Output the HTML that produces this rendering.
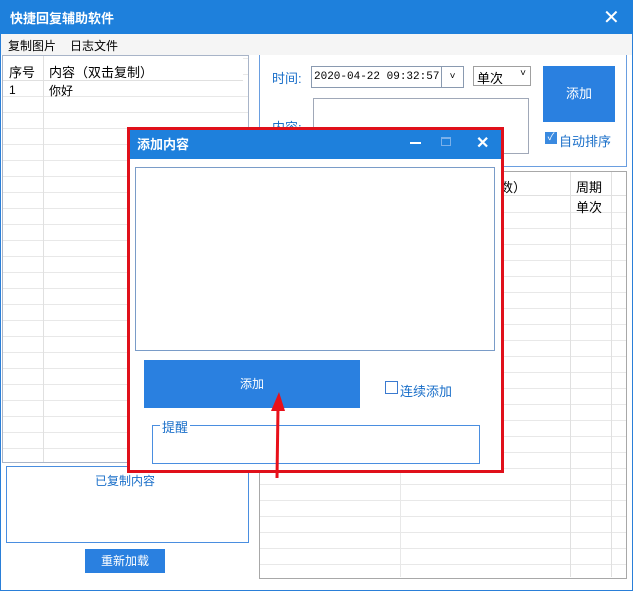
<!DOCTYPE html>
<html><head><meta charset="utf-8"><style>
*{margin:0;padding:0;box-sizing:border-box}
body{width:633px;height:591px;position:relative;overflow:hidden;background:#fff;font-family:"Liberation Sans","Noto Sans CJK SC","WenQuanYi Zen Hei",sans-serif;font-size:12px;color:#000}
.a{position:absolute}
.blue{color:#1a6fc9}
</style></head><body>
<div class="a" style="left:0;top:0;width:633px;height:591px;border:1px solid #2a7fd8"></div>
<div class="a" style="left:0;top:0;width:633px;height:34px;background:#1e80dc"></div>
<div class="a" style="left:10px;top:8px;color:#fff;font-size:13px;font-weight:bold">快捷回复辅助软件</div>
<div class="a" style="left:603px;top:5px;color:#fff;font-size:20px">✕</div>
<div class="a" style="left:1px;top:34px;width:631px;height:21px;background:#f5f5f5"></div>
<div class="a" style="left:8px;top:37px">复制图片</div>
<div class="a" style="left:70px;top:37px">日志文件</div>

<div class="a" style="left:2px;top:55px;width:247px;height:408px;border:1px solid #a8b4c8;
background:repeating-linear-gradient(to bottom,transparent 0,transparent 15px,#e8e8e8 15px,#e8e8e8 16px);background-position:0 25px"></div>
<div class="a" style="left:3px;top:56px;width:240px;height:25px;background:#fff;border-bottom:1px solid #e0e0e0"></div>
<div class="a" style="left:43px;top:56px;width:1px;height:406px;background:#e0e0e0"></div>
<div class="a" style="left:9px;top:62px;font-size:13px">序号</div>
<div class="a" style="left:49px;top:62px;font-size:13px">内容（双击复制）</div>
<div class="a" style="left:9px;top:83px">1</div>
<div class="a" style="left:49px;top:82px">你好</div>

<div class="a" style="left:6px;top:466px;width:243px;height:77px;border:1px solid #4a8ee0"></div>
<div class="a blue" style="left:95px;top:472px">已复制内容</div>
<div class="a" style="left:85px;top:549px;width:80px;height:24px;background:#2a80e0;color:#fff;text-align:center;line-height:24px">重新加载</div>

<div class="a" style="left:259px;top:55px;width:368px;height:112px;border:1px solid #6a9ee0;border-top:none"></div>
<div class="a blue" style="left:272px;top:68px;font-size:13px">时间:</div>
<div class="a" style="left:311px;top:66px;width:153px;height:22px;border:1px solid #8a9ab0;font-family:'Liberation Mono',monospace;font-size:11px;padding:4px 2px">2020-04-22 09:32:57</div>
<div class="a" style="left:441px;top:67px;width:22px;height:20px;border-left:1px solid #8a9ab0;text-align:center;font-size:10px;line-height:20px">˅</div>
<div class="a" style="left:473px;top:66px;width:58px;height:20px;border:1px solid #a0a0a0;padding:1px 3px;font-size:13px">单次<span style="position:absolute;right:4px;top:1px;font-size:10px">˅</span></div>
<div class="a" style="left:543px;top:66px;width:72px;height:56px;background:#2a80e0;color:#fff;text-align:center;line-height:56px;font-size:13px">添加</div>
<div class="a" style="left:545px;top:132px;width:12px;height:12px;background:#3a8ae0;color:#fff;font-size:10px;line-height:12px;text-align:center">✓</div>
<div class="a blue" style="left:559px;top:131px;font-size:13px">自动排序</div>
<div class="a" style="left:313px;top:98px;width:216px;height:56px;border:1px solid #a0a8b8"></div>
<div class="a blue" style="left:272px;top:117px;font-size:13px">内容:</div>

<div class="a" style="left:259px;top:171px;width:368px;height:408px;border:1px solid #a8a8a8;
background:repeating-linear-gradient(to bottom,transparent 0,transparent 15px,#e8e8e8 15px,#e8e8e8 16px);background-position:0 25px"></div>
<div class="a" style="left:260px;top:172px;width:366px;height:24px;background:#fff;border-bottom:1px solid #e0e0e0"></div>
<div class="a" style="left:400px;top:172px;width:1px;height:405px;background:#e8e8e8"></div>
<div class="a" style="left:570px;top:172px;width:1px;height:405px;background:#e0e0e0"></div>
<div class="a" style="left:611px;top:172px;width:1px;height:405px;background:#e0e0e0"></div>
<div class="a" style="left:500px;top:177px;font-size:13px">数）</div>
<div class="a" style="left:576px;top:177px;font-size:13px">周期</div>
<div class="a" style="left:576px;top:197px;font-size:13px">单次</div>

<div class="a" style="left:127px;top:127px;width:377px;height:346px;border:3px solid #e0101a;background:#fff"></div>
<div class="a" style="left:130px;top:130px;width:371px;height:29px;background:#1e80dc"></div>
<div class="a" style="left:137px;top:134px;color:#fff;font-size:13px;font-weight:bold">添加内容</div>
<div class="a" style="left:410px;top:142px;width:11px;height:2px;background:#fff"></div>
<div class="a" style="left:441px;top:137px;width:10px;height:9px;border:1px solid #7ab0ea;border-top-width:2px"></div>
<div class="a" style="left:476px;top:133px;color:#fff;font-size:16px;font-weight:bold">✕</div>
<div class="a" style="left:135px;top:167px;width:360px;height:184px;border:1px solid #7a9cc8"></div>
<div class="a" style="left:144px;top:360px;width:216px;height:48px;background:#2a80e0;color:#fff;text-align:center;line-height:48px">添加</div>
<div class="a" style="left:385px;top:381px;width:13px;height:13px;border:1px solid #3a7ad0"></div>
<div class="a blue" style="left:400px;top:381px;font-size:13px">连续添加</div>
<div class="a" style="left:152px;top:425px;width:328px;height:39px;border:1px solid #4a8ee0"></div>
<div class="a blue" style="left:160px;top:417px;background:#fff;font-size:13px;padding:0 2px">提醒</div>

<svg class="a" style="left:0;top:0" width="633" height="591"><path d="M277 478 L278 408" stroke="#e8101a" stroke-width="3"/><path d="M271 411 L279 392 L285 411 Z" fill="#e8101a"/></svg>
</body></html>
